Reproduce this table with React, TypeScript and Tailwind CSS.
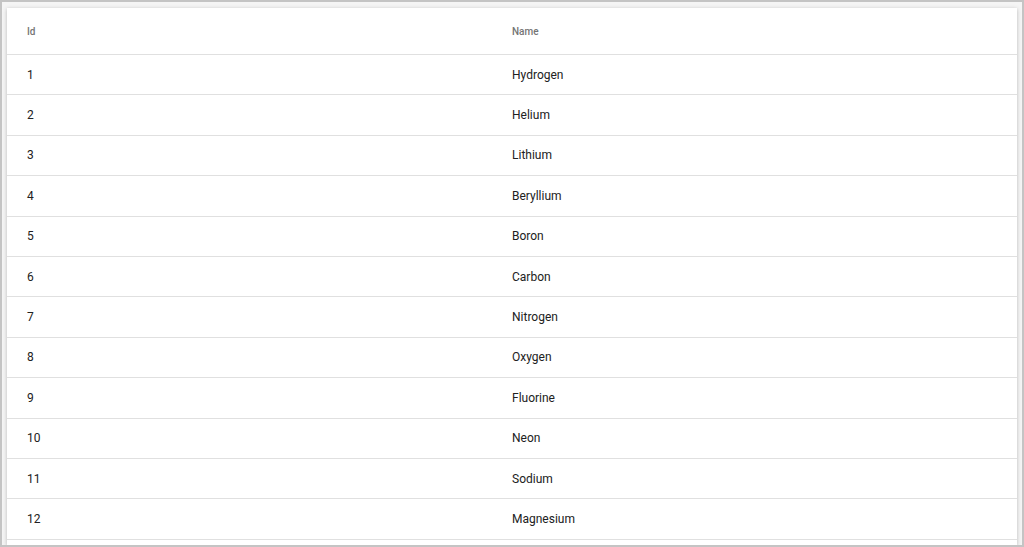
const elements = [
  'Hydrogen',
  'Helium',
  'Lithium',
  'Beryllium',
  'Boron',
  'Carbon',
  'Nitrogen',
  'Oxygen',
  'Fluorine',
  'Neon',
  'Sodium',
  'Magnesium',
]

export default function App() {
  return (
    <div className="h-[547px] w-[1024px] overflow-hidden border-2 border-[#c4c4c4] bg-[#f5f5f5] font-['Roboto',sans-serif]">
      <div className="h-full overflow-hidden px-[5px] pt-[6px]">
        <div className="h-full bg-white shadow-[0_1px_4px_rgba(0,0,0,0.25)]">
          {/* header */}
          <div className="grid h-[47px] grid-cols-[505px_1fr] items-center border-b border-[#e0e0e0] text-[10px] font-medium text-[#757575]">
            <div className="pl-[20px]">Id</div>
            <div>Name</div>
          </div>
          {elements.map((name, i) => (
            <div
              key={name}
              className="grid h-[40.4px] grid-cols-[505px_1fr] items-center border-b border-[#e0e0e0] text-[12px] text-[#212121]"
            >
              <div className="pl-[20px]">{i + 1}</div>
              <div>{name}</div>
            </div>
          ))}
        </div>
      </div>
    </div>
  )
}
